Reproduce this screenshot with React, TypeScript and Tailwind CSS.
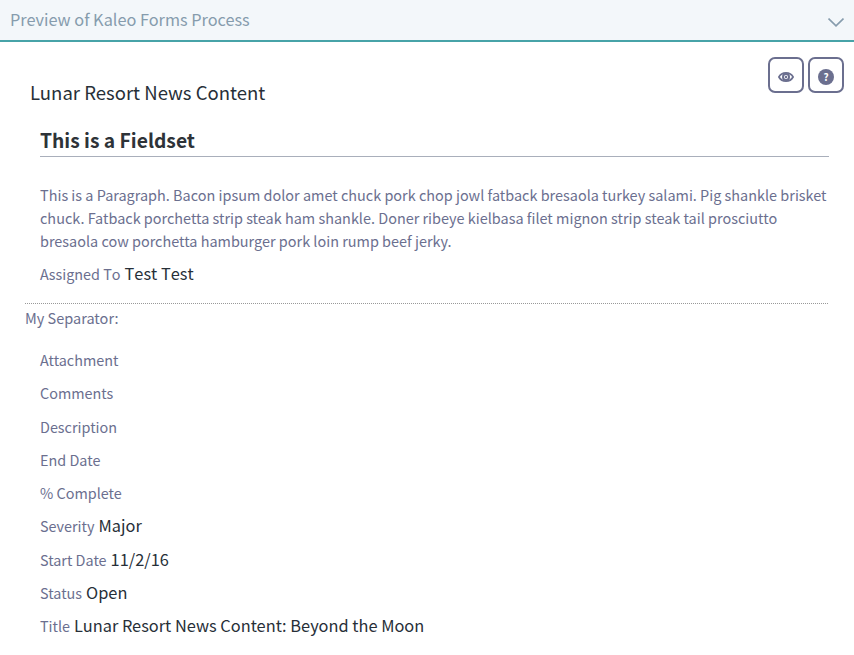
import React from "react";

const fields: { label: string; value?: string }[] = [
  { label: "Attachment" },
  { label: "Comments" },
  { label: "Description" },
  { label: "End Date" },
  { label: "% Complete" },
  { label: "Severity", value: "Major" },
  { label: "Start Date", value: "11/2/16" },
  { label: "Status", value: "Open" },
  { label: "Title", value: "Lunar Resort News Content: Beyond the Moon" },
];

function Field({ label, value }: { label: string; value?: string }) {
  return (
    <div className="flex h-[33.25px] items-end gap-1 whitespace-nowrap pb-[9px] leading-[24px]">
      <span className="text-[14.4px]">{label}</span>
      {value && <span className="pb-[1px] text-[16.36px] text-[#272f38]">{value}</span>}
    </div>
  );
}

const buttonClass =
  "flex size-9 items-center justify-center rounded-[7px] border-2 border-[#6b6f8f] bg-white pt-1";

export default function App() {
  return (
    <div className="h-[655px] w-[854px] overflow-hidden bg-white font-['Noto_Sans_CJK_SC',sans-serif] text-[#6b6f8f]">
      <header className="flex h-[42px] items-center justify-between border-b-2 border-[#47a3a8] bg-[#f3f7fa] pl-[10px] pr-[10px] text-[16.3px] text-[#869cad]">
        <span className="pb-[2px] leading-[24px]">Preview of Kaleo Forms Process</span>
        <svg className="mt-1" width="16" height="9" viewBox="0 0 16 9" fill="none" stroke="#869cad" strokeWidth="1.7">
          <path d="M0.5 0.6 8 7.8 15.5 0.6" />
        </svg>
      </header>
      <div className="flex items-start justify-between pl-[30px] pr-[10px] pt-[15px]">
        <h2 className="pt-[20px] text-[18.55px] leading-[30px] text-[#272f38]">Lunar Resort News Content</h2>
        <div className="flex gap-1">
          <button className={buttonClass}>
            <svg width="16" height="10" viewBox="0 0 16 10" fill="none" stroke="#6b6f8f">
              <path d="M0.9 5C2.5 2 5 0.9 8 0.9S13.5 2 15.1 5C13.5 8 11 9.1 8 9.1S2.5 8 0.9 5Z" strokeWidth="1.7" />
              <circle cx="8" cy="5" r="3" strokeWidth="2" />
              <circle cx="8" cy="5" r="1.2" fill="#6b6f8f" stroke="none" />
            </svg>
          </button>
          <button className={buttonClass}>
            <span className="flex size-4 items-center justify-center rounded-full bg-[#6b6f8f] text-[10px] font-bold leading-4 text-white">?</span>
          </button>
        </div>
      </div>
      <section className="pl-[40px] pr-[25px] pt-[18px]">
        <h3 className="border-b border-[#a9afbb] pb-[1px] text-[19.25px] font-bold leading-[30px] text-[#2e3338]">This is a Fieldset</h3>
        <p className="whitespace-nowrap pt-[26px] text-[14.44px] leading-[23px]">
          This is a Paragraph. Bacon ipsum dolor amet chuck pork chop jowl fatback bresaola turkey salami. Pig shankle brisket
          <br />
          chuck. Fatback porchetta strip steak ham shankle. Doner ribeye kielbasa filet mignon strip steak tail prosciutto
          <br />
          bresaola cow porchetta hamburger pork loin rump beef jerky.
        </p>
        <div className="pt-[10px] [font-kerning:none]">
          <Field label="Assigned To" value="Test Test" />
        </div>
      </section>
      <div className="ml-[25px] mr-[26px] mt-[8px] border-t border-dotted border-[#999] pt-[2px] text-[14.5px] leading-[24px]">
        My Separator:
      </div>
      <div className="pl-[40px] pt-[17.5px]">
        {fields.map((f) => (
          <Field key={f.label} label={f.label} value={f.value} />
        ))}
      </div>
    </div>
  );
}
